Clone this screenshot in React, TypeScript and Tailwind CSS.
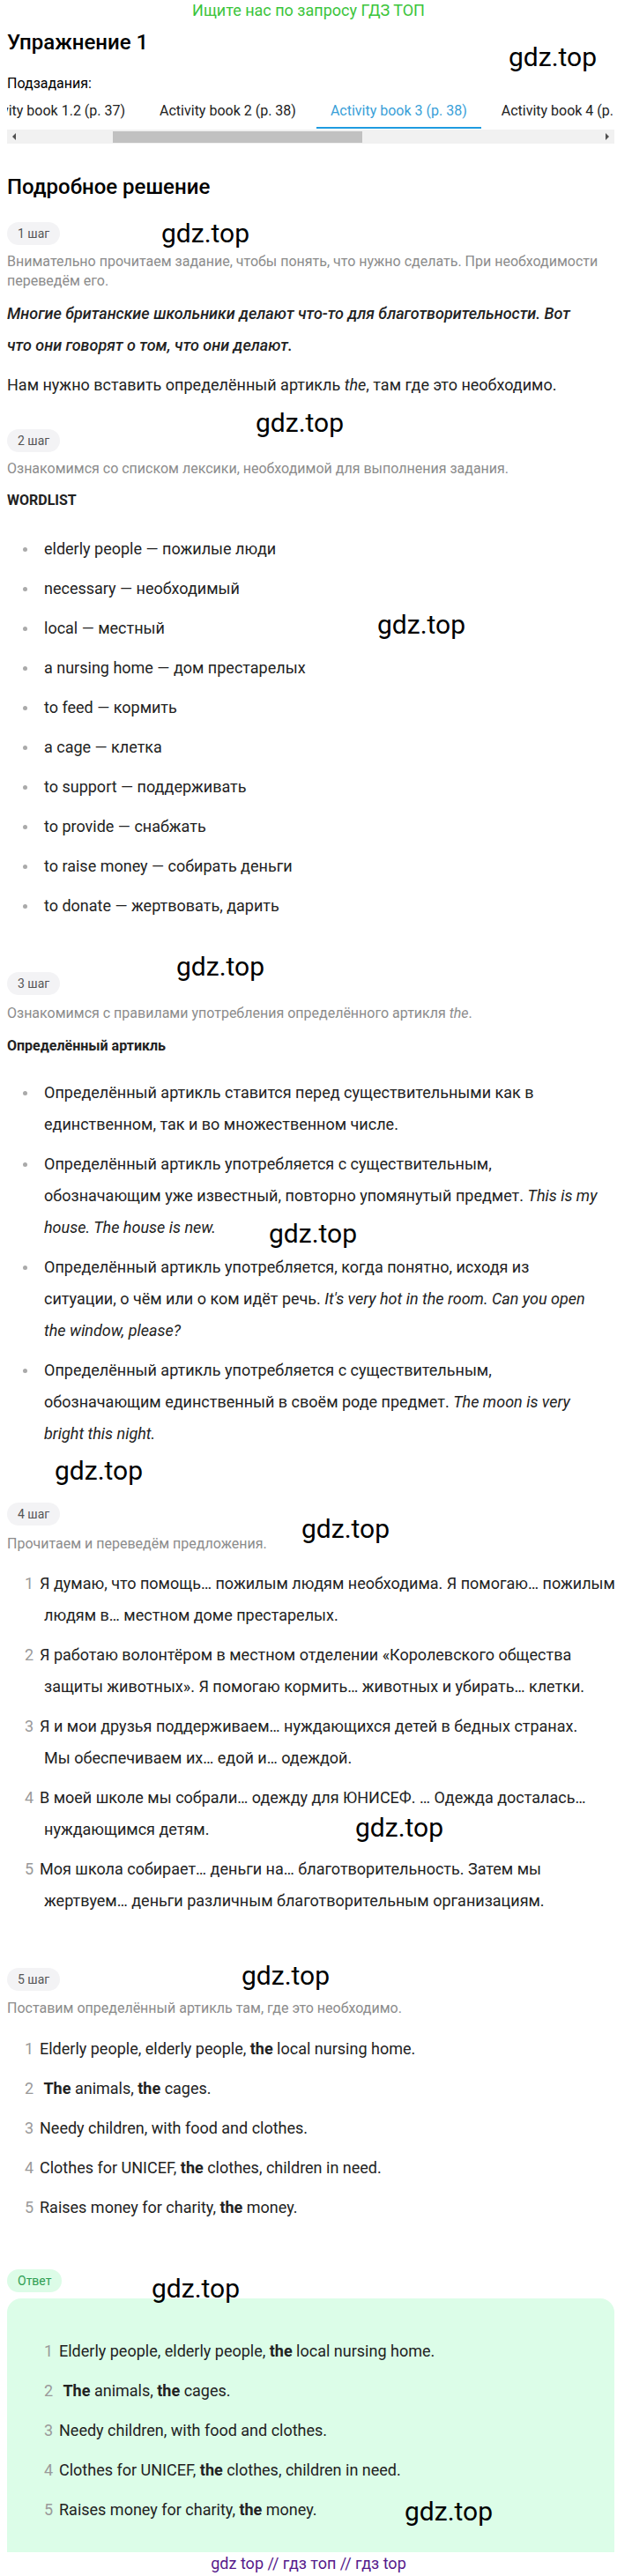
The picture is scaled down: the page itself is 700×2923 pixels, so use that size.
import type { ReactNode } from "react";

function Mark({ x, y }: { x: number; y: number }) {
  return (
    <div
      className="pointer-events-none absolute text-[30px] leading-none text-black font-['Roboto',sans-serif]"
      style={{ left: x, top: y - 3 }}
    >
      gdz.top
    </div>
  );
}

function Step({ children, green, className = "" }: { children: ReactNode; green?: boolean; className?: string }) {
  return (
    <div className={`flex ${className}`}>
      <span
        className={`flex h-[26px] items-center rounded-full px-[12px] text-[14px] ${
          green ? "bg-[#dcfce7] text-[#2e9e52]" : "bg-[#f3f3f5] text-[#555]"
        }`}
      >
        {children}
      </span>
    </div>
  );
}

function Hint({ children, className = "" }: { children: ReactNode; className?: string }) {
  return <p className={`text-[16px] leading-[22px] text-[#8c8c8c] ${className}`}>{children}</p>;
}

function Bullet({ children }: { children: ReactNode }) {
  return (
    <li className="flex">
      <span className="flex h-[36px] w-[24px] shrink-0 items-center">
        <span className="h-[5px] w-[5px] rounded-full bg-[#aaa]" />
      </span>
      <span className="whitespace-nowrap">{children}</span>
    </li>
  );
}

function Num({ n, children }: { n: number; children: ReactNode }) {
  return (
    <li className="whitespace-nowrap pl-[22px] -indent-[22px]">
      <span className="inline-block w-[17px] indent-0 text-[#9a9a9a]">{n}</span>
      {children}
    </li>
  );
}

const words = [
  "elderly people — пожилые люди",
  "necessary — необходимый",
  "local — местный",
  "a nursing home — дом престарелых",
  "to feed — кормить",
  "a cage — клетка",
  "to support — поддерживать",
  "to provide — снабжать",
  "to raise money — собирать деньги",
  "to donate — жертвовать, дарить",
];

const tabs = ["Activity book 1.2 (p. 37)", "Activity book 2 (p. 38)", "Activity book 3 (p. 38)", "Activity book 4 (p. 39)"];

function Answers() {
  return (
    <ol className="flex flex-col gap-[9px] pl-[20px]">
      <Num n={1}>
        Elderly people, elderly people, <b className="font-bold">the</b> local nursing home.
      </Num>
      <Num n={2}>
        {"\u00a0"}
        <b className="font-bold">The</b> animals, <b className="font-bold">the</b> cages.
      </Num>
      <Num n={3}>Needy children, with food and clothes.</Num>
      <Num n={4}>
        Clothes for UNICEF, <b className="font-bold">the</b> clothes, children in need.
      </Num>
      <Num n={5}>
        Raises money for charity, <b className="font-bold">the</b> money.
      </Num>
    </ol>
  );
}

export default function App() {
  return (
    <div className="relative w-[700px] bg-white font-['Roboto',sans-serif] text-[#222]">
      <div className="h-[24px] text-center text-[18px] leading-[24px] text-[#3bc43b]">Ищите нас по запросу ГДЗ ТОП</div>

      <div className="pl-[8px] pr-[3px]">
        <h1 className="mt-[8px] text-[24px] font-medium leading-[32px] text-black">Упражнение 1</h1>
        <p className="mt-[19px] text-[16px] leading-[24px] text-black">Подзадания:</p>

        <div className="overflow-hidden">
          <div className="ml-[-50px] flex gap-[7px] text-[16px] leading-[24px]">
            {tabs.map((t, i) => (
              <div
                key={t}
                className={`whitespace-nowrap border-b-2 px-[16px] pb-[6px] pt-[7px] ${
                  i === 2 ? "border-[#1e9be0] text-[#3a9fd8]" : "border-transparent"
                }`}
              >
                {t}
              </div>
            ))}
          </div>
        </div>
        <div className="mt-[1px] flex h-[16px] items-center bg-[#f1f1f1]">
          <div className="flex w-[16px] justify-center">
            <span className="h-0 w-0 border-y-[4px] border-r-[4px] border-y-transparent border-r-[#505050]" />
          </div>
          <div className="flex flex-1 items-center">
            <div className="ml-[104px] h-[13px] w-[283px] bg-[#c1c1c1]" />
          </div>
          <div className="flex w-[16px] justify-center">
            <span className="h-0 w-0 border-y-[4px] border-l-[4px] border-y-transparent border-l-[#505050]" />
          </div>
        </div>

        <h2 className="mt-[33px] text-[24px] font-medium leading-[32px] text-black">Подробное решение</h2>

        <Step className="mt-[24px]">1 шаг</Step>
        <Hint className="mt-[8px]">
          Внимательно прочитаем задание, чтобы понять, что нужно сделать. При необходимости
          <br />
          переведём его.
        </Hint>
        <p className="mt-[8px] whitespace-nowrap text-[18px] font-medium italic leading-[36px]">
          Многие британские школьники делают что-то для благотворительности. Вот
          <br />
          что они говорят о том, что они делают.
        </p>
        <p className="mt-[9px] text-[18px] leading-[36px]">
          Нам нужно вставить определённый артикль <i>the</i>, там где это необходимо.
        </p>

        <Step className="mt-[32px]">2 шаг</Step>
        <Hint className="mt-[8px]">Ознакомимся со списком лексики, необходимой для выполнения задания.</Hint>
        <p className="mt-[7px] text-[16px] font-bold leading-[36px]">WORDLIST</p>
        <ul className="mt-[19px] flex flex-col gap-[9px] pl-[18px] text-[18px] leading-[36px]">
          {words.map((w) => (
            <Bullet key={w}>{w}</Bullet>
          ))}
        </ul>

        <Step className="mt-[57px]">3 шаг</Step>
        <Hint className="mt-[10px]">
          Ознакомимся с правилами употребления определённого артикля <i>the</i>.
        </Hint>
        <p className="mt-[8px] text-[16px] font-bold leading-[36px]">Определённый артикль</p>
        <ul className="mt-[17px] flex flex-col gap-[9px] pl-[18px] text-[18px] leading-[36px]">
          <Bullet>
            Определённый артикль ставится перед существительными как в
            <br />
            единственном, так и во множественном числе.
          </Bullet>
          <Bullet>
            Определённый артикль употребляется с существительным,
            <br />
            обозначающим уже известный, повторно упомянутый предмет. <i>This is my</i>
            <br />
            <i>house. The house is new.</i>
          </Bullet>
          <Bullet>
            Определённый артикль употребляется, когда понятно, исходя из
            <br />
            ситуации, о чём или о ком идёт речь. <i>It's very hot in the room. Can you open</i>
            <br />
            <i>the window, please?</i>
          </Bullet>
          <Bullet>
            Определённый артикль употребляется с существительным,
            <br />
            обозначающим единственный в своём роде предмет. <i>The moon is very</i>
            <br />
            <i>bright this night.</i>
          </Bullet>
        </ul>

        <Step className="mt-[60px]">4 шаг</Step>
        <Hint className="mt-[10px]">Прочитаем и переведём предложения.</Hint>
        <ol className="mt-[16px] flex flex-col gap-[9px] pl-[20px] text-[18px] leading-[36px]">
          <Num n={1}>
            Я думаю, что помощь… пожилым людям необходима. Я помогаю… пожилым
            <br />
            людям в… местном доме престарелых.
          </Num>
          <Num n={2}>
            Я работаю волонтёром в местном отделении «Королевского общества
            <br />
            защиты животных». Я помогаю кормить… животных и убирать… клетки.
          </Num>
          <Num n={3}>
            Я и мои друзья поддерживаем… нуждающихся детей в бедных странах.
            <br />
            Мы обеспечиваем их… едой и… одеждой.
          </Num>
          <Num n={4}>
            В моей школе мы собрали… одежду для ЮНИСЕФ. … Одежда досталась…
            <br />
            нуждающимся детям.
          </Num>
          <Num n={5}>
            Моя школа собирает… деньги на… благотворительность. Затем мы
            <br />
            жертвуем… деньги различным благотворительным организациям.
          </Num>
        </ol>

        <Step className="mt-[58px]">5 шаг</Step>
        <Hint className="mt-[9px]">Поставим определённый артикль там, где это необходимо.</Hint>
        <div className="mt-[17px] text-[18px] leading-[36px]">
          <Answers />
        </div>

        <Step green className="mt-[52px]">
          Ответ
        </Step>
        <div className="mt-[7px] rounded-t-[16px] bg-[#dcfde8] pb-[30px] pl-[22px] pt-[42px] text-[18px] leading-[36px]">
          <Answers />
        </div>
      </div>

      <div className="h-[27px] text-center text-[18px] leading-[26px] text-[#551a8b]">gdz top // гдз топ // гдз top</div>

      <Mark x={577} y={53} />
      <Mark x={183} y={253} />
      <Mark x={290} y={468} />
      <Mark x={428} y={697} />
      <Mark x={200} y={1085} />
      <Mark x={305} y={1388} />
      <Mark x={62} y={1657} />
      <Mark x={342} y={1723} />
      <Mark x={403} y={2062} />
      <Mark x={274} y={2230} />
      <Mark x={172} y={2585} />
      <Mark x={459} y={2838} />
    </div>
  );
}
